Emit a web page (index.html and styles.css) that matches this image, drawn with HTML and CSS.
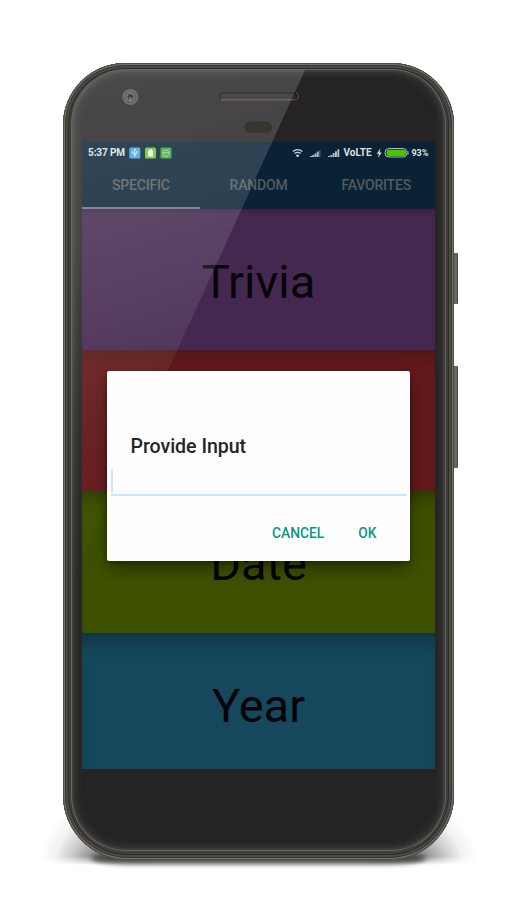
FILE: index.html
```html
<!DOCTYPE html>
<html lang="en">
<head>
<meta charset="utf-8">
<title>Provide Input</title>
<link rel="stylesheet" href="styles.css">
</head>
<body>
<div class="phone">
  <i class="shadow"></i><i class="ground"></i>
  <i class="button power"></i><i class="button volume"></i>
  <div class="metal"><div class="glass">
    <header class="forehead">
      <svg width="353" height="73" viewBox="82 69 353 73">
        <circle cx="130.4" cy="97" r="8" fill="#555352"/><circle cx="130.4" cy="97" r="5.400" fill="#353433"/><circle cx="130.4" cy="97" r="4" fill="none" stroke="#6d6b68" stroke-width="1.400"/><circle cx="130.4" cy="96.500" r="2" fill="#181716"/><path d="M130.500 97v4" stroke="#747260" stroke-width="1.500"/>
        <rect x="219.500" y="93" width="78" height="6.500" rx="3.200" fill="#2b2625" stroke="#0d0b0b" stroke-width="1"/><path d="M221 99.800h74.500c3.500-.7 3.500-5.500.5-6.800" fill="none" stroke="#706d6b" stroke-width=".9"/>
        <rect x="244.500" y="121.500" width="27.500" height="11.500" rx="5.700" fill="#13110b"/>
      </svg>
    </header>
    <main class="screen">
      <div class="status">
        <span class="time">5:37 PM</span>
        <svg width="44" height="12" viewBox="0 0 44 12">
          <rect x=".3" y=".5" width="11" height="11" rx="1.500" fill="#42a5e0"/><path d="M5.800 2v8M3.700 4v2.200l2.100 1.300 2.100-1.300V4M5 3l.8-1 .8 1" fill="none" stroke="#fff" stroke-width=".8"/>
          <rect x="16" y=".5" width="11" height="11" rx="1.500" fill="#66c62c"/><path d="M19.200 3.500h1.200V2.300h2.400v1.200H24V9.500h-4.800z" fill="#fff"/>
          <rect x="31.500" y=".5" width="11" height="11" rx="1.500" fill="#3aa339"/><path d="M34 5.400h6v2c0 2.800-6 2.800-6 0zc0-3 6-3 6 0M34.500 2.500l1 1M39.500 2.500l-1 1M35.500 7.300h.8M37.700 7.300h.8" fill="none" stroke="#b9e6b0" stroke-width=".8"/>
        </svg>
        <svg class="signals" width="50" height="12" viewBox="0 0 50 12">
          <g fill="none" stroke="#c9d1d6" stroke-width="1.300"><path d="M.8 4.600q4.800-4 9.600 0"/><path d="M2.500 6.600q3.100-2.500 6.200 0"/></g><circle cx="5.600" cy="8.800" r="1.300" fill="#d9dee1"/>
          <g fill="#b4bec5"><path d="M18 10V9h1.900v1zM20.200 10V8h1.900v2zM22.500 10V6.500h1.900V10zM24.800 10V4.500h1.900V10z"/><path d="M27.200 10V3h1.300v7z" fill="#52606c"/><path d="M36 10V9h2v1zM38.300 10V8h2v2zM40.700 10V6h1.900v4zM43 10V4.200h1.900V10zM45.400 10V2.200h1.900V10z"/></g>
        </svg>
        <span class="volte">VoLTE</span>
        <svg class="battery" width="33" height="12" viewBox="0 0 33 12"><path d="M4.500 1.300L.7 6.700h2.200l-.8 4 3.700-5.300H3.600z" fill="#d8dee2"/><rect x="9" y="1.500" width="22" height="8.500" rx="4" fill="#0b2538" stroke="#aeb9b8"/><rect x="10.500" y="2.700" width="19.500" height="6.200" rx="2.300" fill="#48c600"/><path d="M32 4.300v3.400" stroke="#aeb9b8"/></svg>
        <span class="percent">93%</span>
      </div>
      <nav class="tabs"><span class="active">SPECIFIC</span><span>RANDOM</span><span>FAVORITES</span></nav>
      <section class="card trivia">Trivia</section>
      <section class="card math"></section>
      <section class="card date">Date</section>
      <section class="card year">Year</section>
    </main>
    <i class="gloss"></i>
    <div class="dialog">
      <h1>Provide Input</h1>
      <div class="field"><i></i></div>
      <div class="actions"><b>CANCEL</b><b class="ok">OK</b></div>
    </div>
  </div></div>
</div>
</body>
</html>
```
FILE: styles.css
```css
* { box-sizing: border-box; }
body { margin: 0; width: 520px; height: 923px; overflow: hidden; background: #fff; font-family: Roboto, "Liberation Sans", sans-serif; }
.phone { position: relative; width: 391px; height: 797px; margin: 63px 0 0 63px; }
.shadow { position: absolute; left: -28px; right: -28px; bottom: -5px; height: 64px; background: radial-gradient(ellipse 62px 62px at 66px 100%, rgba(0,0,0,.6), rgba(0,0,0,.2) 50%, rgba(0,0,0,.05) 75%, transparent), radial-gradient(ellipse 62px 62px at calc(100% - 66px) 100%, rgba(0,0,0,.6), rgba(0,0,0,.2) 50%, rgba(0,0,0,.05) 75%, transparent); -webkit-mask-image: linear-gradient(#000 86%, transparent); mask-image: linear-gradient(#000 86%, transparent); }
.ground { position: absolute; left: 28px; right: 28px; bottom: -4px; height: 12px; border-radius: 40px / 6px; background: #484848; filter: blur(2.500px); }
.button { position: absolute; right: -4px; width: 5px; border-radius: 1px; background: linear-gradient(90deg, #444540, #76736f 60%, #3c3a38); }
.power { top: 190px; height: 51px; }
.volume { top: 303px; height: 102px; }
.metal { position: relative; width: 391px; height: 797px; padding: 6px 8px 9px; border-radius: 62px 62px 65px 65px; background: #413f3b; box-shadow: inset 0 0 0 1px #514c48, inset 0 0 0 2px #777270, inset 0 0 0 3px #38342f, inset 0 0 0 5px #4d4944, inset 0 0 0 6px #2d2c29; }
.glass { position: relative; width: 375px; height: 782px; padding: 0 11px; border-radius: 55px; background: #252324; box-shadow: inset 0 0 0 1px #656665, inset 0 0 0 3px #3c3d3b, inset 0 0 10px 3px #424240; }
.forehead { height: 73px; }
.forehead svg { display: block; }
.screen { width: 353px; height: 627px; overflow: hidden; background: #0a2235; }
.status { display: flex; align-items: center; height: 21px; padding-left: 6px; color: #dde2e5; font-size: 10px; font-weight: 700; white-space: nowrap; }
.time { width: 41px; font-size: 10px; letter-spacing: -.1px; }
.status svg { flex: none; }
.signals { margin-left: 118.500px; }
.volte { width: 31px; margin-left: 2px; font-size: 10px; }
.battery { margin-left: 1px; }
.percent { margin-left: 3px; font-size: 9px; letter-spacing: -.1px; }
.tabs { display: flex; height: 46px; }
.tabs span { flex: 1; border-bottom: 2px solid transparent; text-align: center; line-height: 45px; font-size: 14px; letter-spacing: -.2px; font-weight: 500; color: #515b61; }
.tabs .active { border-color: #69757d; color: #5c5c5c; }
.card { display: flex; justify-content: center; align-items: center; height: 141px; padding-top: 3px; color: #060408; font-size: 47px; border-radius: 1px; box-shadow: inset 0 5px 7px -5px rgba(0,0,0,.35); }
.trivia { background: #442850; }
.math { background: #651a1b; box-shadow: inset 0 18px 18px -10px rgba(0,0,0,.2); }
.date { height: 142px; background: #3e5200; box-shadow: inset 0 15px 18px -10px rgba(0,0,0,.35); }
.year { height: 137px; padding-top: 8px; background: #15485c; box-shadow: inset 0 18px 18px -10px rgba(0,0,0,.3); }
.gloss { position: absolute; inset: 1px; border-radius: 54px 0 0 50px; background: linear-gradient(163deg, rgba(255,255,255,.17), rgba(255,255,255,.145) 18%, rgba(255,255,255,.04) 42%, rgba(255,255,255,0) 58%); clip-path: polygon(0 0, 233px 0, 0 511px); pointer-events: none; }
.dialog { position: absolute; left: 36px; top: 301.500px; width: 303px; height: 190px; padding: 63px 3px 0 4px; border-radius: 2px; background: #fefefe; box-shadow: 0 8px 18px rgba(0,0,0,.38), 0 2px 5px rgba(0,0,0,.25); }
h1 { margin: 0 0 0 19.500px; font-size: 19.600px; letter-spacing: -.05px; line-height: 26px; font-weight: 500; color: #252525; }
.field { display: flex; height: 36px; border-bottom: 2px solid #c8e8ff; padding: 9px 0 0 0; }
.field i { width: 2px; height: 23px; background: #c8e8ff; }
.actions { display: flex; gap: 34px; padding: 28px 0 0 161px; color: #079688; font-size: 13.800px; line-height: 18px; }
.actions b { font-weight: 500; }
```
